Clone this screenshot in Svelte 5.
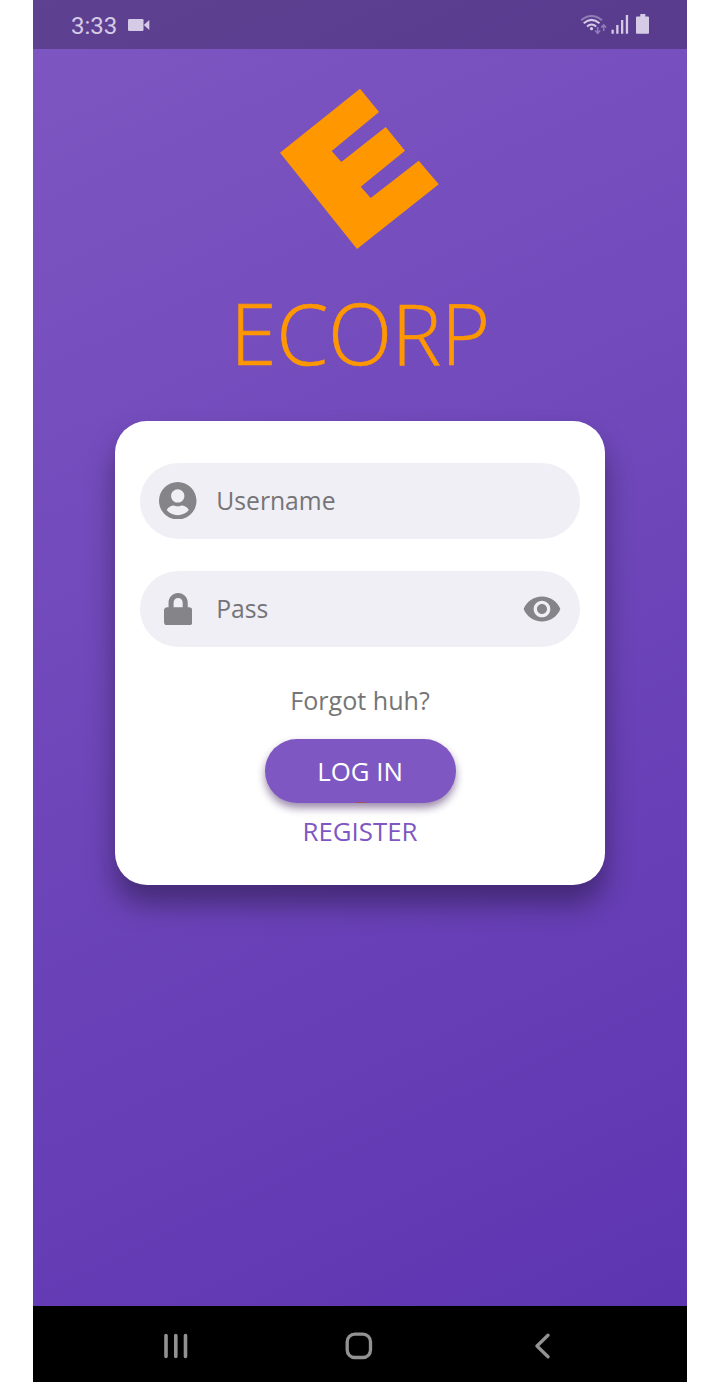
<script>
  let username = $state('');
  let password = $state('');
  let revealed = $state(false);
</script>

<div class="phone">
  <header class="status">
    <span class="time">3:33</span>
    <svg class="camera" width="22" height="12" viewBox="0 0 22 12">
      <rect width="15.500" height="12" rx="1.200" />
      <path d="M15.800 6 21.300 1v10Z" />
    </svg>
    <svg class="signals" width="70" height="24" viewBox="0 0 70 24">
      <g fill="none" stroke="currentColor" stroke-width="2">
        <path d="M1.200 7.200Q11.500-1.200 22 7.200" opacity=".45" />
        <path d="M3.700 10.300Q11.500 3.500 19.500 10.300" />
        <path d="M7 13.500q4.500-4 9.200 0" />
        <path d="M17.700 14v6M15.200 17.600l2.500 2.700 2.500-2.700M23.700 18v-6M21.200 14.600l2.500-2.700 2.500 2.700" stroke-width="1.500" opacity=".45" />
      </g>
      <circle cx="11.500" cy="15.700" r="1.600" />
      <path d="M31.500 16.800h2.300v4h-2.300zM36.200 12h2.300v8.800h-2.300zM41 7h2.300v13.800H41zM45.800 2h2.300v18.800h-2.300z" />
      <path d="M60.300 1.100h5V3.500H68q1 0 1 1V20q0 .8-1 .8H57q-1 0-1-.8V4.500q0-1 1-1h3.300Z" />
    </svg>
  </header>

  <main>
    <svg class="logo" width="160" height="162" viewBox="280 88 160 162">
      <path d="M360 88.700 379 112 331.700 151 341.300 162 385.700 127 405 150.700 360.700 186.700 370.700 198 418.700 160.700 438.700 184.300 357 249 280 152.700Z" fill="#ff9800" />
    </svg>
    <h1>ECORP</h1>

    <form class="card" onsubmit={(e) => e.preventDefault()}>
      <label class="field">
        <span class="icon">
          <svg width="37.500" height="37.500" viewBox="0 8 496 496"><path d="M248 8C111 8 0 119 0 256s111 248 248 248 248-111 248-248S385 8 248 8zm0 96c48.600 0 88 39.400 88 88s-39.400 88-88 88-88-39.400-88-88 39.400-88 88-88zm0 344c-58.700 0-111.300-26.600-146.500-68.200 18.800-35.400 55.600-59.800 98.500-59.800 2.400 0 4.800.4 7.100 1.100 13 4.200 26.600 6.900 40.900 6.900 14.300 0 28-2.700 40.900-6.900 2.300-.7 4.700-1.100 7.100-1.100 42.900 0 79.700 24.400 98.500 59.800C359.300 421.400 306.700 448 248 448z" /></svg>
        </span>
        <input type="text" placeholder="Username" bind:value={username} />
      </label>
      <label class="field">
        <span class="icon">
          <svg width="28.300" height="32.400" viewBox="0 0 448 512"><path d="M400 224h-24v-72C376 68.200 307.800 0 224 0S72 68.200 72 152v72H48c-26.500 0-48 21.500-48 48v192c0 26.500 21.500 48 48 48h352c26.500 0 48-21.500 48-48V272c0-26.500-21.500-48-48-48zm-104 0H152v-72c0-39.700 32.300-72 72-72s72 32.300 72 72v72z" /></svg>
        </span>
        <input type={revealed ? 'text' : 'password'} placeholder="Pass" bind:value={password} />
        <button class="eye" type="button" onclick={() => (revealed = !revealed)}>
          <svg width="40" height="40" viewBox="0 0 24 24"><path d="M12 4.500C7 4.500 2.730 7.610 1 12c1.730 4.390 6 7.500 11 7.500s9.270-3.110 11-7.500c-1.730-4.390-6-7.500-11-7.500zM12 17c-2.760 0-5-2.240-5-5s2.240-5 5-5 5 2.240 5 5-2.240 5-5 5zm0-8c-1.660 0-3 1.340-3 3s1.340 3 3 3 3-1.340 3-3-1.340-3-3-3z" /></svg>
        </button>
      </label>
      <div class="forgot">Forgot huh?</div>
      <button class="login" type="submit">LOG IN<span class="spark"></span></button>
      <div class="register">REGISTER</div>
    </form>
  </main>

  <nav>
    <svg width="24" height="26" viewBox="0 0 24 26"><path d="M2 2.500v21M11.800 2.500v21M21.500 2.500v21" stroke-width="3.600" /></svg>
    <svg class="home" width="28" height="28" viewBox="0 0 28 28"><rect x="2.200" y="2.200" width="23.300" height="23.300" rx="7.500" stroke-width="3.300" /></svg>
    <svg width="16" height="26" viewBox="0 0 16 26"><path d="M14 2.200 3 13l11 10.800" stroke-width="3.300" /></svg>
  </nav>
</div>

<style>
  :global(body) {
    margin: 0;
    background: #fff;
  }
  .phone {
    box-sizing: border-box;
    width: 654px;
    height: 1382px;
    margin: 0 auto;
    display: flex;
    flex-direction: column;
    background: linear-gradient(155deg, #7e57c2, #5e35b1) 0 0 / 100% 1306px no-repeat;
    font-family: "Open Sans", "Noto Sans", sans-serif;
    font-size: 25.800px;
    overflow: hidden;
  }
  .status {
    box-sizing: border-box;
    flex: none;
    height: 49px;
    padding: 0 37px 0 38px;
    display: flex;
    align-items: center;
    background: rgba(0, 0, 0, 0.250);
    color: #d6cbe6;
  }
  .status svg {
    fill: currentColor;
  }
  .time {
    font: 24px/49px Roboto, sans-serif;
    padding-top: 3px;
  }
  .camera {
    margin-left: 11px;
  }
  .signals {
    margin-left: auto;
  }
  main {
    flex: 1;
    display: flex;
    flex-direction: column;
    align-items: center;
  }
  .logo {
    margin-top: 39px;
  }
  h1 {
    margin: 25px 0 0;
    font: 300 84px/116px "Open Sans", "Noto Sans", sans-serif;
    letter-spacing: -0.500px;
    -webkit-text-stroke: 0.600px #ff9800;
    color: #ff9800;
  }
  .card {
    box-sizing: border-box;
    width: 490.500px;
    height: 464.500px;
    margin-top: 29.500px;
    padding: 42px 25.500px 0;
    display: flex;
    flex-direction: column;
    align-items: center;
    border-radius: 32px;
    background: #fff;
    box-shadow: 0 19px 28px rgba(0, 0, 0, 0.360);
  }
  .field {
    box-sizing: border-box;
    width: 100%;
    height: 76px;
    margin-bottom: 32.300px;
    padding: 0 18px 0 17.500px;
    display: flex;
    align-items: center;
    border-radius: 38px;
    background: #f0eff5;
  }
  .icon {
    width: 40px;
    display: flex;
    justify-content: center;
  }
  .field svg {
    display: block;
    fill: #858489;
  }
  input {
    flex: 1;
    min-width: 0;
    margin-left: 18.500px;
    padding: 0 0 1px;
    border: 0;
    outline: 0;
    background: none;
    font: inherit;
    font-size: 24.700px;
    color: #444;
  }
  input::placeholder {
    color: #757477;
    opacity: 1;
  }
  button {
    padding: 0;
    border: 0;
    background: none;
    font: inherit;
  }
  .forgot {
    margin-top: 3px;
    font-size: 25.100px;
    line-height: 36px;
    color: #757575;
  }
  .login {
    position: relative;
    width: 191px;
    height: 64px;
    margin-top: 21px;
    border-radius: 32px;
    background: #7e57c2;
    color: #fff;
    box-shadow: 0 5px 9px rgba(45, 10, 80, 0.480);
  }
  .spark {
    position: absolute;
    left: 89px;
    bottom: 0;
    width: 14px;
    height: 1px;
    background: linear-gradient(90deg, transparent, #a34d60 30%, #a34d60 70%, transparent);
  }
  .register {
    margin-top: 10px;
    line-height: 36px;
    color: #7e57c2;
  }
  nav {
    box-sizing: border-box;
    flex: none;
    height: 76px;
    padding: 4px 137px 0 131px;
    display: flex;
    justify-content: space-between;
    align-items: center;
    background: #000;
  }
  nav svg {
    fill: none;
    stroke: #929292;
    stroke-linecap: round;
    stroke-linejoin: round;
  }
  .home {
    margin-right: 4px;
  }
</style>
